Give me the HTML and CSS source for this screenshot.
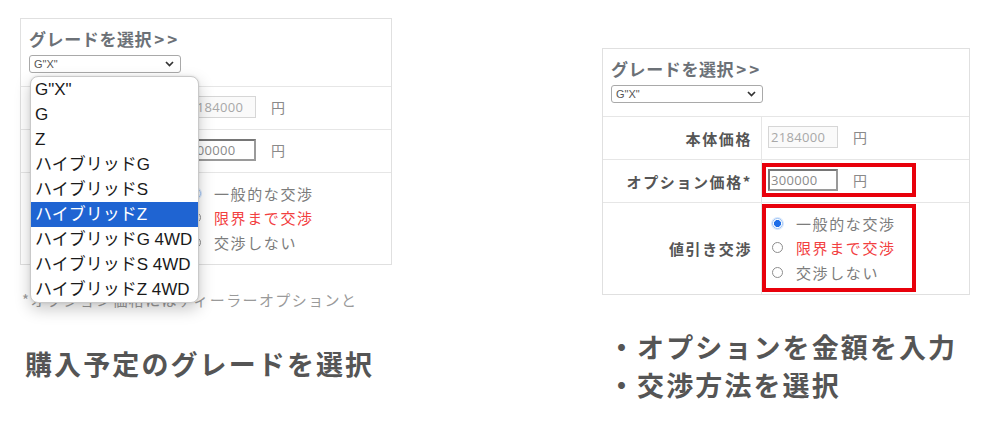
FILE: index.html
```html
<!DOCTYPE html>
<html lang="ja">
<head>
<meta charset="utf-8">
<title>グレード選択</title>
<link rel="stylesheet" href="styles.css">
</head>
<body>
<div class="page">
  <section class="shot shot-left">
    <div class="form-wrap">
      <div class="form form-left">
        <div class="row-head">
          <div class="grade-title">グレードを選択<span class="arrows">&gt;&gt;</span></div>
          <div class="select"><span class="select-text">G"X"</span><svg class="chev" width="9" height="6" viewBox="0 0 9 6"><path d="M1 1 L4.5 4.5 L8 1" fill="none" stroke="#333" stroke-width="1.7"/></svg></div>
        </div>
        <div class="row row-price">
          <div class="label">本体価格</div>
          <div class="value"><div class="frame"><div class="field field-disabled">2184000</div><span class="yen">円</span></div></div>
        </div>
        <div class="row row-price">
          <div class="label">オプション価格*</div>
          <div class="value"><div class="frame"><div class="field field-active">300000</div><span class="yen">円</span></div></div>
        </div>
        <div class="row row-radio">
          <div class="label">値引き交渉</div>
          <div class="value"><div class="frame frame-radio">
            <div class="radio-line"><span class="radio radio-on"></span><span class="radio-text">一般的な交渉</span></div>
            <div class="radio-line"><span class="radio"></span><span class="radio-text radio-red">限界まで交渉</span></div>
            <div class="radio-line"><span class="radio"></span><span class="radio-text">交渉しない</span></div>
          </div></div>
        </div>
      </div>
      <ul class="dropdown">
        <li>G"X"</li>
        <li>G</li>
        <li>Z</li>
        <li>ハイブリッドG</li>
        <li>ハイブリッドS</li>
        <li class="selected">ハイブリッドZ</li>
        <li>ハイブリッドG 4WD</li>
        <li>ハイブリッドS 4WD</li>
        <li>ハイブリッドZ 4WD</li>
      </ul>
    </div>
    <p class="note">*オプション価格にはディーラーオプションと</p>
    <h2 class="caption caption-left">購入予定のグレードを選択</h2>
  </section>

  <section class="shot shot-right">
    <div class="form form-right">
      <div class="row-head">
        <div class="grade-title">グレードを選択<span class="arrows">&gt;&gt;</span></div>
        <div class="select"><span class="select-text">G"X"</span><svg class="chev" width="9" height="6" viewBox="0 0 9 6"><path d="M1 1 L4.5 4.5 L8 1" fill="none" stroke="#333" stroke-width="1.7"/></svg></div>
      </div>
      <div class="row row-price">
        <div class="label">本体価格</div>
        <div class="value"><div class="frame"><div class="field field-disabled">2184000</div><span class="yen">円</span></div></div>
      </div>
      <div class="row row-price">
        <div class="label">オプション価格*</div>
        <div class="value"><div class="frame frame-mark"><div class="field field-active">300000</div><span class="yen">円</span></div></div>
      </div>
      <div class="row row-radio">
        <div class="label">値引き交渉</div>
        <div class="value"><div class="frame frame-radio frame-mark">
          <div class="radio-line"><span class="radio radio-on"></span><span class="radio-text">一般的な交渉</span></div>
          <div class="radio-line"><span class="radio"></span><span class="radio-text radio-red">限界まで交渉</span></div>
          <div class="radio-line"><span class="radio"></span><span class="radio-text">交渉しない</span></div>
        </div></div>
      </div>
    </div>
    <div class="caption caption-list">
      <div class="caption-line">・オプションを金額を入力</div>
      <div class="caption-line">・交渉方法を選択</div>
    </div>
  </section>
</div>
</body>
</html>
```

FILE: styles.css
```css
* { box-sizing: border-box; }
html, body { margin: 0; padding: 0; background: #fff; }
body {
  font-family: "Noto Sans CJK JP", "Noto Sans", sans-serif;
  color: #555;
}
.page {
  width: 1000px;
  height: 433px;
  display: flex;
  overflow: hidden;
}
.shot { display: flex; flex-direction: column; }
.shot-left { width: 602px; padding: 18px 0 0 20px; }
.shot-right { width: 398px; padding: 48px 0 0 0; }

.form-wrap { position: relative; width: 372px; }
.form {
  border: 1px solid #e0e0e0;
  background: #fff;
}
.form-left { width: 372px; }
.form-right { width: 368px; }

.row-head {
  height: 67px;
  padding: 9px 0 0 8px;
}
.grade-title {
  font-size: 17px;
  line-height: 22px;
  font-weight: 700;
  color: #6c7177;
  letter-spacing: 0.6px;
}
.arrows {
  margin-left: 2px;
  letter-spacing: 3px;
}
.select {
  margin-top: 5px;
  width: 152px;
  height: 18px;
  border: 1px solid #a9a9a9;
  border-radius: 3px;
  display: flex;
  align-items: center;
  justify-content: space-between;
  padding: 0 6px 0 4px;
  font-family: "Liberation Sans", sans-serif;
  font-size: 11px;
  color: #555;
}
.chev { display: block; }

.row {
  display: grid;
  grid-template-columns: 159px 1fr;
  border-top: 1px solid #e6e6e6;
}
.row-price { height: 43px; }
.row-radio { height: 92px; }
.label {
  border-right: 1px solid #e6e6e6;
  display: flex;
  align-items: center;
  justify-content: flex-end;
  padding-right: 9px;
  font-size: 15px;
  font-weight: 700;
  color: #555;
  letter-spacing: 1.6px;
}
.value {
  display: flex;
  align-items: center;
}
.frame {
  width: 154px;
  height: 34px;
  border: 4px solid transparent;
  display: flex;
  align-items: center;
  padding-left: 2px;
  margin-top: -2px;
}
.frame-mark { border-color: #e8000b; }
.frame-radio {
  height: 88px;
  flex-direction: column;
  align-items: flex-start;
  justify-content: center;
  padding-left: 6px;
  margin-top: -2px;
}
.field {
  width: 70px;
  height: 22px;
  font-family: "Open Sans", sans-serif;
  font-size: 13px;
  line-height: 20px;
  padding-left: 2px;
  letter-spacing: 0.3px;
}
.field-disabled {
  border: 1px solid #d6d6d6;
  background: #fafafa;
  color: #a8a8a8;
}
.field-active {
  border: 2px solid #767676;
  border-right-color: #9a9a9a;
  border-bottom-color: #9a9a9a;
  color: #8a8a8a;
  line-height: 18px;
  padding-left: 1px;
}
.yen {
  margin-left: 15px;
  font-size: 14px;
  color: #8a8a8a;
}

.radio-line {
  height: 24.5px;
  display: flex;
  align-items: center;
}
.radio {
  width: 11px;
  height: 11px;
  border-radius: 50%;
  border: 1px solid #8d8d8d;
  background: #fff;
  flex: none;
}
.radio-on {
  border: 1px solid #9cc2f5;
  background: radial-gradient(circle, #1e6ee8 0 3.2px, #ffffff 3.8px 100%);
  box-shadow: 0 0 0 1px #d6e6fb;
}
.radio-text {
  margin-left: 13px;
  font-size: 15px;
  letter-spacing: 1.6px;
  color: #7c7c7c;
}
.radio-red { color: #f2403f; }

.dropdown {
  position: absolute;
  left: 10px;
  top: 58px;
  width: 169px;
  margin: 0;
  padding: 0;
  list-style: none;
  background: #fff;
  border: 1px solid #c9c9c9;
  border-radius: 8px;
  box-shadow: 0 6px 16px rgba(0, 0, 0, 0.22), 0 0 3px rgba(0, 0, 0, 0.1);
  overflow: hidden;
}
.dropdown li {
  height: 25px;
  line-height: 25px;
  padding-left: 4px;
  font-family: "Liberation Sans", "Noto Sans CJK JP", sans-serif;
  font-size: 17px;
  color: #1a1a1a;
  white-space: nowrap;
}
.dropdown li.selected {
  background: #1f64d2;
  color: #fff;
}

.note {
  margin: 25px 0 0 2px;
  font-size: 15px;
  line-height: 20px;
  color: #9a9a9a;
  letter-spacing: 1.4px;
  white-space: nowrap;
  width: 370px;
  overflow: hidden;
}
.caption {
  margin: 0;
  font-weight: 700;
  font-size: 27px;
  color: #555;
  letter-spacing: 2.1px;
}
.caption-left {
  margin: 38px 0 0 5px;
  line-height: 32px;
}
.caption-list {
  margin: 33px 0 0 6px;
}
.caption-line {
  line-height: 38px;
}
```
